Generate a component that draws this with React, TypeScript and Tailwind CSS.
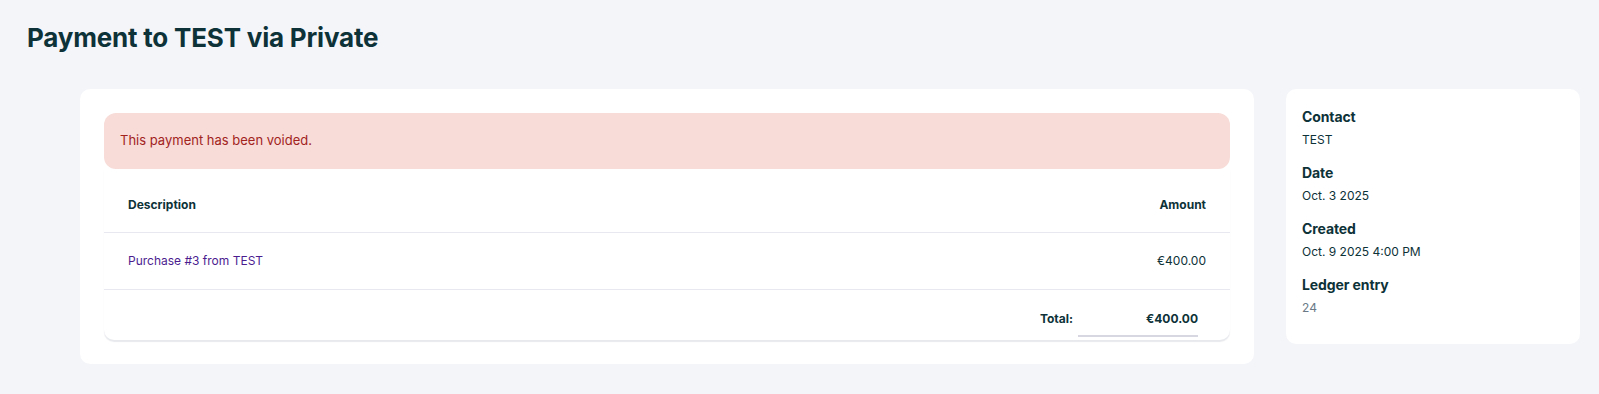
export default function App() {
  const details = [
    { label: "Contact", value: "TEST" },
    { label: "Date", value: "Oct. 3 2025" },
    { label: "Created", value: "Oct. 9 2025 4:00 PM" },
    { label: "Ledger entry", value: "24", muted: true },
  ];

  return (
    <div
      className="min-h-[394px] bg-[#f4f5f9] text-[#0d3238]"
      style={{ fontFamily: "Inter, 'Liberation Sans', sans-serif" }}
    >
      <h1 className="pl-[27px] pt-[22px] text-[26px] leading-[32px] font-bold tracking-[-0.2px]">
        Payment to TEST via Private
      </h1>

      <div className="flex items-start gap-[32px] pl-[80px] pr-[19px] pt-[35px]">
        {/* Main card */}
        <div className="flex-1 rounded-[10px] bg-white p-6">
          <div className="flex h-[56px] items-center rounded-[12px] bg-[#f7dcd8] px-4 text-[13px] text-[#a2231d]">
            This payment has been voided.
          </div>

          <div className="rounded-b-[10px] shadow-[0_2px_1px_rgba(30,40,80,0.10)]">
            <div className="flex h-[64px] items-center justify-between border-b border-[#e8e8f0] px-6 pt-[8px] text-[12px] font-bold">
              <span>Description</span>
              <span>Amount</span>
            </div>
            <div className="flex h-[57px] items-center justify-between border-b border-[#e8e8f0] px-6 text-[12px]">
              <span className="text-[#4c1d8f]">Purchase #3 from TEST</span>
              <span>€400.00</span>
            </div>
            <div className="flex h-[50px] items-start justify-end pt-[20px] pr-[32px] text-[12px] font-bold">
              <span className="mr-[5px]">Total:</span>
              <span className="w-[120px] border-b-2 border-[#d6d7e1] pb-[7px] text-right">€400.00</span>
            </div>
          </div>
        </div>

        {/* Sidebar */}
        <div className="w-[294px] rounded-[10px] bg-white px-4 pt-[19px] pb-[26px]">
          <div className="flex flex-col gap-[14px]">
            {details.map((d) => (
              <div key={d.label} className="flex flex-col gap-[4px]">
                <span className="text-[14px] leading-[18px] font-bold tracking-[-0.1px]">{d.label}</span>
                <span className={`text-[12px] leading-[20px] ${d.muted ? "text-[#6b7a86]" : ""}`}>
                  {d.value}
                </span>
              </div>
            ))}
          </div>
        </div>
      </div>
    </div>
  );
}
